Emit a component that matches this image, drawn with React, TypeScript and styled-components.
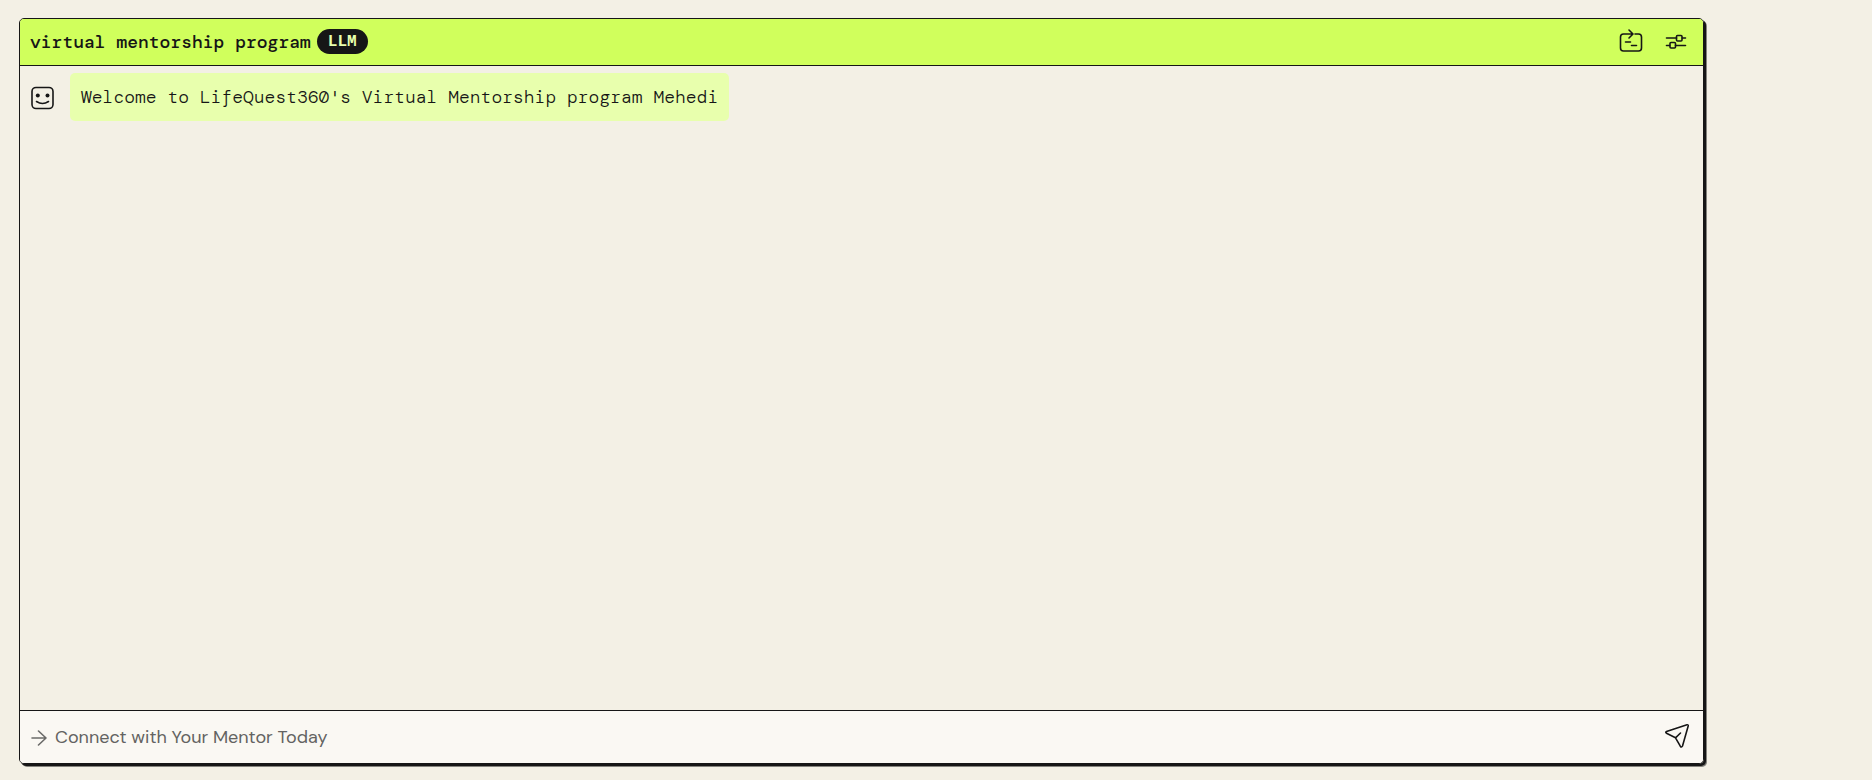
import React, { useState } from "react";
import styled, { createGlobalStyle } from "styled-components";

const ink = "#161616";
const mono = '"DM Mono", "Liberation Mono", monospace';

const GlobalStyle = createGlobalStyle`
  *, *::before, *::after { box-sizing: border-box; }
  html, body { margin: 0; background: #f3f0e5; }
  button, input { font: inherit; color: inherit; }
`;

const Page = styled.main`
  display: flex;
  min-height: 100vh;
  padding: 18px 19px 16px;
  color: ${ink};
`;

const Panel = styled.section`
  display: flex;
  flex-direction: column;
  width: 90vw;
  border: 1px solid ${ink};
  border-radius: 5px;
  box-shadow: 2px 2px 0 ${ink}, 3px 3px 0 rgba(22, 22, 22, 0.5);
  overflow: hidden;
`;

const Header = styled.header`
  display: flex;
  align-items: center;
  gap: 6px;
  height: 47px;
  padding: 0 13px 2px 10px;
  background: #d0ff5c;
  border-bottom: 1px solid ${ink};
`;

const Title = styled.h1`
  margin: 0;
  padding-top: 2px;
  font: 500 18px/24px ${mono};
`;

const Badge = styled.span`
  padding: 1px 11px 0;
  border-radius: 13px;
  background: ${ink};
  color: #e8ffad;
  font: 700 16px/24px "Liberation Mono", monospace;
`;

const Actions = styled.div`
  display: flex;
  gap: 17px;
  margin-left: auto;
`;

const IconButton = styled.button`
  display: grid;
  place-items: center;
  padding: 0;
  border: 0;
  background: none;
  cursor: pointer;
`;

const Messages = styled.div`
  flex: 1;
  padding: 7px 10px;
`;

const Message = styled.div`
  display: flex;
  align-items: center;
  gap: 15px;
`;

const Bubble = styled.p`
  margin: 0;
  padding: 12px 11px;
  border-radius: 5px;
  background: #e8ffad;
  font: 300 18px/24px ${mono};
`;

const Composer = styled.form`
  display: flex;
  align-items: center;
  gap: 8px;
  height: 53px;
  padding: 0 11px 0 10px;
  background: #faf8f3;
  border-top: 1px solid ${ink};
`;

const Prompt = styled.input`
  flex: 1;
  min-width: 0;
  height: 40px;
  padding: 0;
  border: 0;
  outline: 0;
  background: transparent;
  font: 400 18px/24px "DM Sans", Inter, sans-serif;
  &::placeholder { color: #636361; opacity: 1; }
`;

const Icon = styled.svg<{ $muted?: boolean }>`
  display: block;
  flex: none;
  fill: none;
  stroke: ${(p) => (p.$muted ? "#6b6b69" : ink)};
  stroke-width: 1.6;
  stroke-linecap: round;
  stroke-linejoin: round;
`;

export default function App() {
  const [text, setText] = useState("");
  return (
    <Page>
      <GlobalStyle />
      <Panel>
        <Header>
          <Title>virtual mentorship program</Title>
          <Badge>LLM</Badge>
          <Actions>
            <IconButton type="button" aria-label="Restart conversation">
              <Icon width="28" height="28" viewBox="0 0 28 28">
                <path d="M9.500 7H6.500a3 3 0 0 0-3 3v11a3 3 0 0 0 3 3h15a3 3 0 0 0 3-3V10a3 3 0 0 0-3-3h-3.500M9.500 7h6M12 3l4 4-4 4M8.500 15h5M14.500 18.500h5" />
              </Icon>
            </IconButton>
            <IconButton type="button" aria-label="Settings">
              <Icon width="28" height="28" viewBox="0 0 28 28">
                <path d="M4.500 11h10M20.500 11h3M4.500 18.500h3M13.500 18.500h10" />
                <rect x="14.500" y="8.500" width="5.500" height="5.500" rx="1" />
                <rect x="8" y="15.500" width="5.500" height="5.500" rx="1" />
              </Icon>
            </IconButton>
          </Actions>
        </Header>
        <Messages>
          <Message>
            <Icon width="25" height="25" viewBox="0 0 25 25" role="img" aria-label="Mentor">
              <rect x="2" y="2.500" width="21" height="21" rx="4" />
              <path d="M6.500 16.500q6 4 12 0" />
              <circle cx="7.800" cy="10.500" r="2" fill={ink} stroke="none" />
              <circle cx="17.500" cy="10.500" r="2" fill={ink} stroke="none" />
            </Icon>
            <Bubble>Welcome to LifeQuest360's Virtual Mentorship program Mehedi</Bubble>
          </Message>
        </Messages>
        <Composer onSubmit={(e) => { e.preventDefault(); setText(""); }}>
          <Icon $muted width="17" height="20" viewBox="0 0 17 20">
            <path d="M2 11h14M8.500 4l7.500 7-7.500 7" />
          </Icon>
          <Prompt
            aria-label="Message"
            placeholder="Connect with Your Mentor Today"
            value={text}
            onChange={(e) => setText(e.target.value)}
          />
          <IconButton type="submit" aria-label="Send">
            <Icon width="30" height="30" viewBox="0 0 30 30">
              <path d="M4.500 9.500 25 2.800q1.500-.3 1.200 1.200L20.500 24q-1 2-2.200.2L13.500 15.800 4.500 11.300q-1.500-1 0-1.800zM13.500 15.800l5-4.800" />
            </Icon>
          </IconButton>
        </Composer>
      </Panel>
    </Page>
  );
}
